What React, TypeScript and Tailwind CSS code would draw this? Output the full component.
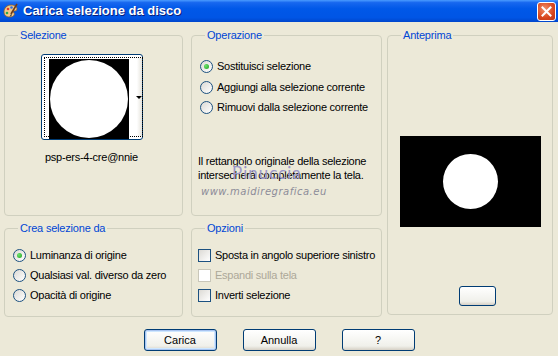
import React from "react";

const font = "font-['Tahoma','Liberation_Sans',sans-serif]";

function Radio({ label, checked }: { label: string; checked?: boolean }) {
  return (
    <div className="flex h-[20px] items-center gap-[4px] whitespace-nowrap">
      <span className="flex h-[13px] w-[13px] items-center justify-center rounded-full border border-[#1c5180] bg-[linear-gradient(135deg,#dcdad5,#ffffff)]">
        {checked && (
          <span className="h-[5px] w-[5px] rounded-full bg-[radial-gradient(circle_at_35%_35%,#6ce36c,#21a121)]" />
        )}
      </span>
      <span className="text-[11px] tracking-[-0.25px] text-black">{label}</span>
    </div>
  );
}

function Check({ label, disabled }: { label: string; disabled?: boolean }) {
  return (
    <div className="flex h-[20px] items-center gap-[4px] whitespace-nowrap">
      <span
        className={`h-[13px] w-[13px] border ${
          disabled
            ? "border-[#c9c7ba] bg-white"
            : "border-[#1c5180] bg-[linear-gradient(135deg,#dcdad5,#ffffff)]"
        }`}
      />
      <span
        className={`text-[11px] tracking-[-0.25px] ${
          disabled ? "text-[#aca899]" : "text-black"
        }`}
      >
        {label}
      </span>
    </div>
  );
}

function Group({
  title,
  className,
  children,
}: {
  title: string;
  className?: string;
  children?: React.ReactNode;
}) {
  return (
    <fieldset
      className={`rounded-[4px] border border-[#d0d0bf] px-[6px] ${className ?? ""}`}
    >
      <legend className="ml-[7px] px-[2px] text-[11px] leading-[13px] tracking-[-0.2px] text-[#0046d5]">
        {title}
      </legend>
      {children}
    </fieldset>
  );
}

function XpButton({ label, def }: { label: string; def?: boolean }) {
  return (
    <button
      className={`h-[22px] w-[73px] rounded-[3px] border border-[#003c74] bg-[linear-gradient(#ffffff,#f0f0ea_80%,#d6d0c5)] text-[11px] text-black ${
        def ? "shadow-[inset_0_0_0_1px_#a9c4f0,inset_0_0_0_2px_#cee7ff]" : ""
      }`}
    >
      {label}
    </button>
  );
}

function AppIcon() {
  return (
    <svg width="17" height="17" viewBox="0 0 17 17">
      <path
        d="M2 9c0-4 3-7 7-7 4 0 6 2 6 4 0 2-2 2-3 2-1 0-1 1 0 2 1 1 0 4-4 4C4 14 2 12 2 9z"
        fill="#f2c98a"
        stroke="#8a5a2a"
        strokeWidth="0.8"
      />
      <circle cx="6" cy="6" r="1.3" fill="#e23b2e" />
      <circle cx="9.5" cy="4.5" r="1.3" fill="#2f6fe0" />
      <circle cx="5" cy="10" r="1.3" fill="#2ea84a" />
      <path d="M15 1 9 11" stroke="#6b3b1a" strokeWidth="1.6" />
      <path d="M9 11l-1.5 3 2.6-2z" fill="#333" />
    </svg>
  );
}

export default function App() {
  return (
    <div className={`h-[356px] w-[558px] overflow-hidden bg-[#ece9d8] ${font}`}>
      {/* title bar */}
      <div className="flex h-[22px] items-center bg-[linear-gradient(#4a9bff_0%,#1767ef_12%,#0058e8_40%,#0055e5_80%,#0046cc_100%)] pl-[2px] pr-[2px]">
        <AppIcon />
        <span className="ml-[4px] font-['Trebuchet_MS','Liberation_Sans',sans-serif] text-[13px] font-bold text-white [text-shadow:1px_1px_#0a1f7a]">
          Carica selezione da disco
        </span>
        <div className="ml-auto flex h-[19px] w-[19px] items-center justify-center rounded-[3px] border border-white bg-[radial-gradient(circle_at_40%_35%,#f0906a,#d8461d_60%,#b8351a)]">
          <svg width="11" height="11" viewBox="0 0 11 11">
            <path
              d="M1.5 1.5l8 8M9.5 1.5l-8 8"
              stroke="white"
              strokeWidth="2"
              strokeLinecap="square"
            />
          </svg>
        </div>
      </div>

      {/* body */}
      <div className="grid grid-cols-[179px_199px_171px] grid-rows-[187px_95px] gap-y-[6px] pl-[4px] pt-[7px]">
        <Group title="Selezione">
          <div className="ml-[30px] mt-[12px] flex h-[86px] w-[102px] rounded-[3px] border border-[#003c74] bg-white p-[2px]">
            <div className="flex flex-1 border border-dotted border-black">
              <div className="ml-[4px] mt-[1px] flex h-[80px] w-[80px] items-center justify-center bg-black">
                <div className="h-[78px] w-[78px] rounded-full bg-white" />
              </div>
              <div className="flex-1 bg-[linear-gradient(90deg,#ffffff_60%,#e6e4dc)]">
                <div className="ml-[7px] mt-[38px] h-0 w-0 border-x-[3px] border-t-[3px] border-x-transparent border-t-black" />
              </div>
            </div>
          </div>
          <div className="ml-[34px] mt-[9px] text-[11px] tracking-[-0.25px] text-black">
            psp-ers-4-cre@nnie
          </div>
        </Group>

        <Group title="Operazione" className="relative ml-[8px]">
          <div className="mt-[14px] pl-[2px]">
            <Radio label="Sostituisci selezione" checked />
            <div className="h-[1px]" />
            <Radio label="Aggiungi alla selezione corrente" />
            <Radio label="Rimuovi dalla selezione corrente" />
          </div>
          <p className="mt-[37px] text-[11px] leading-[14px] tracking-[-0.25px] text-black">
            Il rettangolo originale della selezione
            <br />
            intersecherà completamente la tela.
          </p>
          <div className="pointer-events-none absolute left-[40px] top-[122px] font-['Lato',sans-serif] text-[17px] leading-[17px] tracking-[1px] text-[#9a96c8]">
            Pinuccia
          </div>
          <div className="pointer-events-none absolute left-[9px] top-[142px] font-['Verdana','DejaVu_Sans',sans-serif] text-[10px] italic tracking-[0.5px] text-[#8c8c98]">
            www.maidiregrafica.eu
          </div>
        </Group>

        <Group title="Anteprima" className="row-span-2 ml-[5px] h-[286px] self-start">
          <div className="mx-auto mt-[94px] flex h-[91px] w-[141px] items-center justify-center bg-black">
            <div className="h-[55px] w-[55px] rounded-full bg-white" />
          </div>
          <div className="ml-[65px] mt-[59px] h-[20px] w-[37px] rounded-[3px] border border-[#003c74] bg-[linear-gradient(#ffffff,#f0f0ea_80%,#d6d0c5)]" />
        </Group>

        <Group title="Crea selezione da">
          <div className="mt-[10px] pl-[2px]">
            <Radio label="Luminanza di origine" checked />
            <Radio label="Qualsiasi val. diverso da zero" />
            <Radio label="Opacità di origine" />
          </div>
        </Group>

        <Group title="Opzioni" className="ml-[8px]">
          <div className="mt-[10px]">
            <Check label="Sposta in angolo superiore sinistro" />
            <Check label="Espandi sulla tela" disabled />
            <Check label="Inverti selezione" />
          </div>
        </Group>
      </div>

      {/* buttons */}
      <div className="mt-[12px] flex justify-center gap-[26px]">
        <XpButton label="Carica" def />
        <XpButton label="Annulla" />
        <XpButton label="?" />
      </div>
    </div>
  );
}
